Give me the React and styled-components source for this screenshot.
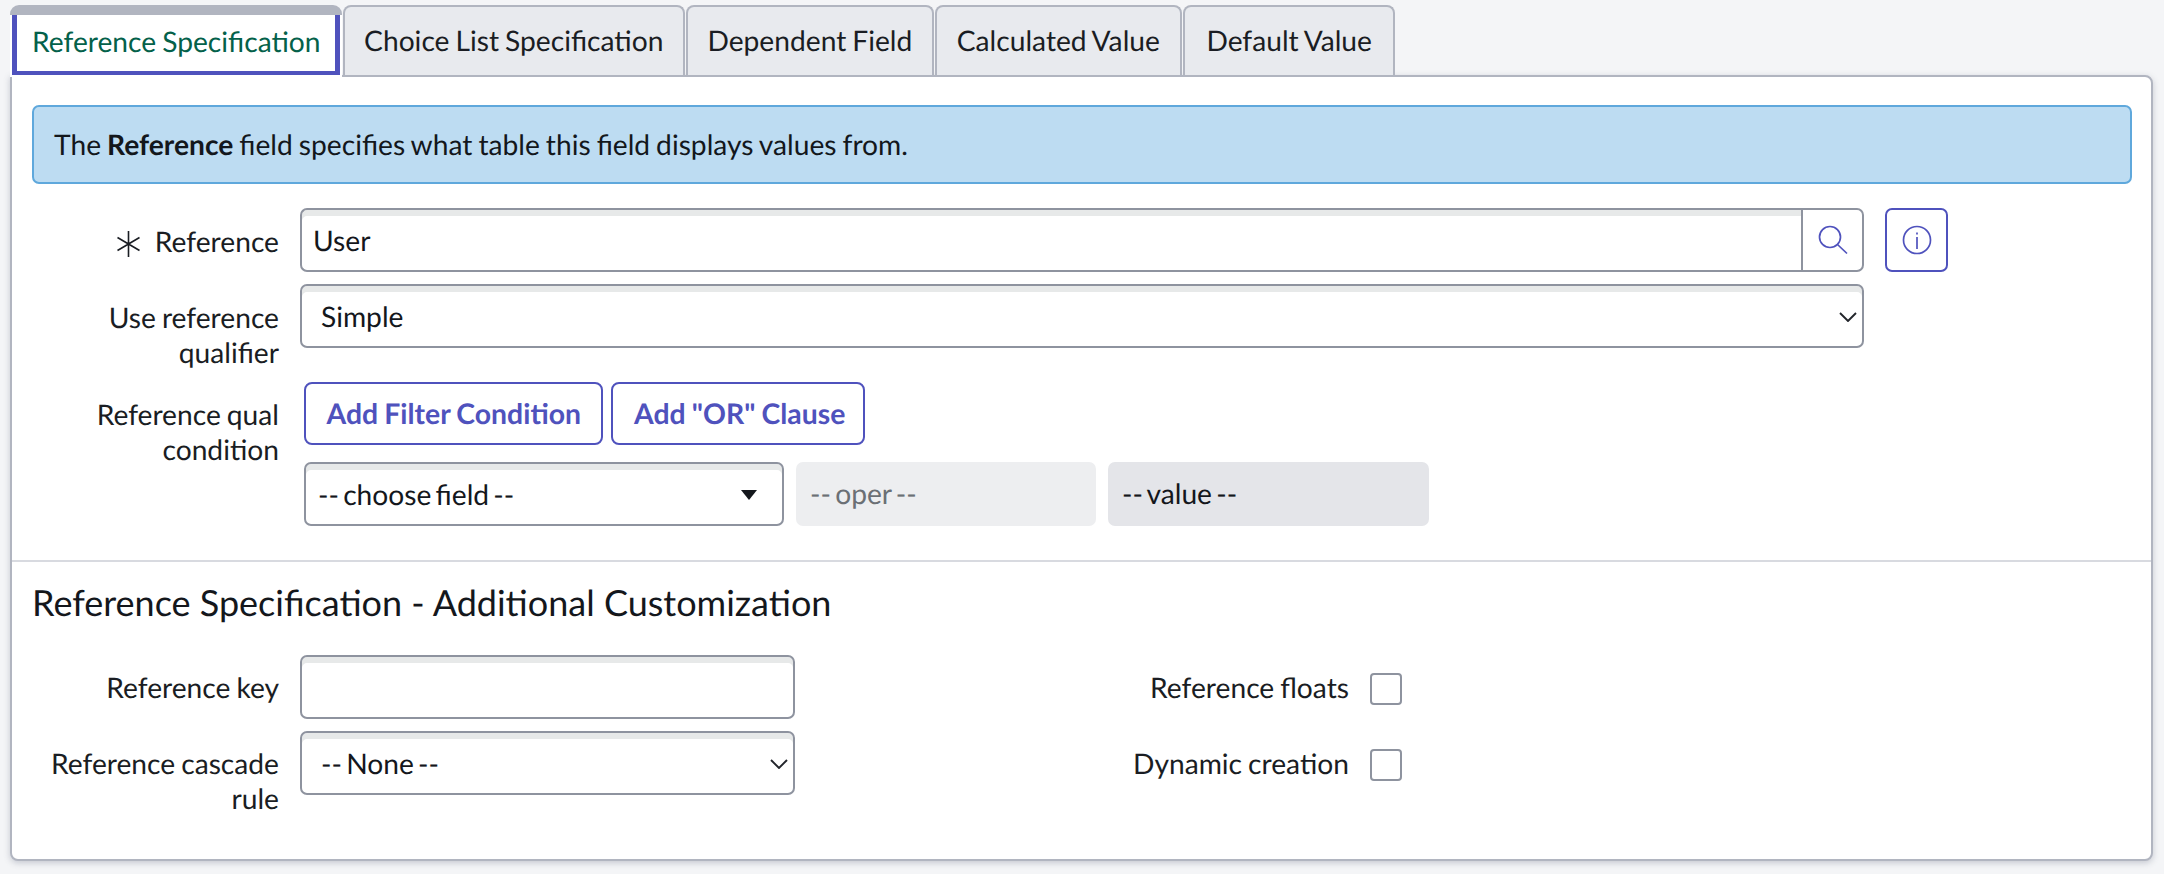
import React from "react";
import styled, { createGlobalStyle } from "styled-components";

const Global = createGlobalStyle`
  html, body { margin: 0; background: #f4f5f7; }
  body {
    font-family: Lato, "Noto Sans", sans-serif;
    font-size: 28.2px;
    word-spacing: -1.2px;
    color: #1a1d23;
    text-rendering: geometricPrecision;
  }
  input, button { text-rendering: geometricPrecision; }
  * { box-sizing: border-box; }
`;

const Page = styled.div`
  padding: 5px 11px 13px 10px;
`;
const TabBar = styled.div`
  display: flex;
  align-items: flex-start;
  gap: 1px;
`;
const Tab = styled.div`
  height: 70px;
  padding: 0 ${(p) => p.$pad ?? 19.5}px;
  display: flex;
  align-items: center;
  background: #e8eaee;
  border: 2px solid #b1b5c0;
  border-bottom: none;
  border-radius: 8px 8px 0 0;
  line-height: 60px;
  white-space: nowrap;
`;
const ActiveTab = styled.div`
  position: relative;
  z-index: 1;
  height: 72px;
  margin-bottom: -2px;
  border-top: 10px solid #b1b5c0;
  border-radius: 9px 9px 0 0;
  background: #fff;
  white-space: nowrap;
`;
const ActiveLabel = styled.div`
  height: 60px;
  margin: 0 2px;
  padding: 0 14px 3px 15px;
  display: flex;
  align-items: center;
  color: #04614a;
  border: solid #4f52bd;
  border-width: 0 5px 4px 5px;
`;
const Panel = styled.div`
  background: #fff;
  border: 2px solid #b1b5c0;
  border-radius: 0 8px 8px 8px;
  box-shadow: 0 2px 6px rgba(90, 96, 120, 0.3);
`;
const Section = styled.div`
  padding: 28px 19.5px 34px 20px;
  display: flex;
  flex-direction: column;
`;
const Notice = styled.div`
  height: 79px;
  margin-bottom: 24px;
  padding-left: 20px;
  display: flex;
  align-items: center;
  background: #bddcf2;
  border: 2px solid #5fa8dc;
  border-radius: 7px;
  color: #13171c;
  b { font-weight: 700; white-space: pre; }
  span { white-space: pre; }
`;
const Row = styled.div`
  display: flex;
  align-items: flex-start;
  gap: 21px;
  margin-bottom: ${(p) => p.$mb ?? 12}px;
`;
const Label = styled.div`
  width: 247px;
  flex: none;
  padding-top: 16.5px;
  text-align: right;
  line-height: 35px;
`;
const Star = styled.svg`
  width: 25px;
  height: 26px;
  margin-right: 14px;
  vertical-align: -5px;
`;
const fieldBox = `
  height: 64px;
  background: #fff;
  border: 2px solid #8e939f;
  box-shadow: inset 0 6px 0 #e7e9e9;
  color: #14171c;
  font-family: inherit;
  font-size: 28.2px;
`;
const RefGroup = styled.div`
  width: 1564px;
  display: flex;
`;
const TextInput = styled.input`
  ${fieldBox}
  flex: 1;
  min-width: 0;
  padding: 2px 11px 0;
  border-radius: 7px 0 0 7px;
  border-right: none;
  outline: none;
`;
const SearchButton = styled.button`
  width: 63px;
  height: 64px;
  padding: 0;
  display: flex;
  align-items: center;
  justify-content: center;
  background: #fff;
  border: 2px solid #8e939f;
  border-radius: 0 7px 7px 0;
`;
const InfoButton = styled.button`
  width: 63px;
  height: 64px;
  padding: 0;
  flex: none;
  display: flex;
  align-items: center;
  justify-content: center;
  background: #fff;
  border: 2px solid #4f52bd;
  border-radius: 7px;
`;
const Select = styled.div`
  ${fieldBox}
  width: ${(p) => p.$w}px;
  flex: none;
  padding: 2px ${(p) => p.$pr ?? 5}px 0 ${(p) => p.$pl ?? 19}px;
  display: flex;
  align-items: center;
  justify-content: space-between;
  border-radius: 7px;
  white-space: nowrap;
  word-spacing: -3px;
`;
const Plain = styled.input`
  ${fieldBox}
  width: 495px;
  flex: none;
  padding: 2px 11px 0;
  border-radius: 7px;
  outline: none;
`;
const Stack = styled.div`
  padding-left: 4px;
  display: flex;
  flex-direction: column;
  gap: 17px;
`;
const Buttons = styled.div`
  display: flex;
  gap: 8px;
`;
const ActionButton = styled.button`
  height: 63px;
  padding: 2px ${(p) => p.$pr ?? 20.5}px 0 20.5px;
  background: #fff;
  border: 2px solid #4f52bd;
  border-radius: 8px;
  color: #4f52bd;
  font-family: inherit;
  font-size: 28.4px;
  font-weight: 700;
  word-spacing: -0.8px;
`;
const Filters = styled.div`
  display: flex;
  gap: 12px;
`;
const Muted = styled.div`
  width: ${(p) => p.$w}px;
  height: 64px;
  padding: 0 14px;
  display: flex;
  align-items: center;
  background: ${(p) => p.$bg};
  border-radius: 7px;
  color: ${(p) => p.$fg};
  white-space: nowrap;
  word-spacing: -3px;
`;
const Divider = styled.div`
  height: 2px;
  background: #d8dae0;
`;
const Lower = styled.div`
  padding: 20px 19px 42px 20px;
`;
const Heading = styled.h2`
  margin: 0 0 33px;
  font-size: 36px;
  font-weight: 400;
  line-height: 40px;
  word-spacing: 0;
  color: #14171c;
`;
const Columns = styled.div`
  display: flex;
`;
const LeftColumn = styled.div`
  flex: none;
`;
const RightColumn = styled.div`
  flex: none;
  width: 607px;
`;
const CheckRow = styled.div`
  display: flex;
  align-items: flex-start;
  gap: 21px;
  height: 64px;
  margin-bottom: 12px;
`;
const CheckLabel = styled.div`
  flex: 1;
  padding-top: 16.5px;
  text-align: right;
  line-height: 35px;
`;
const Check = styled.input`
  appearance: none;
  flex: none;
  width: 32px;
  height: 32px;
  margin: 18px 0 0;
  background: #fff;
  border: 2px solid #8e939f;
  border-radius: 4px;
`;

const Chevron = () => (
  <svg width="18" height="10" viewBox="0 0 18 10" fill="none">
    <path d="M1 1l8 8 8-8" stroke="#22252b" strokeWidth="1.9" />
  </svg>
);
const Triangle = () => (
  <svg width="16" height="10" viewBox="0 0 16 10">
    <path d="M0 0h16l-8 10z" fill="#14171c" />
  </svg>
);

export default function App() {
  return (
    <Page>
      <Global />
      <TabBar>
        <ActiveTab>
          <ActiveLabel>Reference Specification</ActiveLabel>
        </ActiveTab>
        <Tab>Choice List Specification</Tab>
        <Tab>Dependent Field</Tab>
        <Tab $pad={20}>Calculated Value</Tab>
        <Tab $pad={21.5}>Default Value</Tab>
      </TabBar>
      <Panel>
        <Section>
          <Notice>
            <span>The </span>
            <b>Reference</b>
            <span> field specifies what table this field displays values from.</span>
          </Notice>
          <Row>
            <Label>
              <Star viewBox="0 0 25 26" fill="none" stroke="#1a1d23" strokeWidth="1.6">
                <path d="M12.5 0v26M1.5 6.5l22 13M23.5 6.5l-22 13" />
              </Star>
              Reference
            </Label>
            <RefGroup>
              <TextInput defaultValue="User" readOnly />
              <SearchButton aria-label="Search">
                <svg width="32" height="32" viewBox="0 0 32 32" fill="none" stroke="#4f52bd" strokeWidth="1.7">
                  <circle cx="13" cy="13" r="10.5" />
                  <path d="M20.5 20.5L30 29.5" />
                </svg>
              </SearchButton>
            </RefGroup>
            <InfoButton aria-label="Info">
              <svg width="30" height="30" viewBox="0 0 30 30" fill="none" stroke="#4f52bd" strokeWidth="1.7">
                <circle cx="15" cy="15" r="13.5" />
                <path d="M15 12v12M15 7.5v2" />
              </svg>
            </InfoButton>
          </Row>
          <Row $mb={11}>
            <Label>Use reference qualifier</Label>
            <Select $w={1564}>
              Simple
              <Chevron />
            </Select>
          </Row>
          <Row $mb={0}>
            <Label>Reference qual condition</Label>
            <Stack>
              <Buttons>
                <ActionButton>Add Filter Condition</ActionButton>
                <ActionButton $pr={18}>Add "OR" Clause</ActionButton>
              </Buttons>
              <Filters>
                <Select $w={480} $pl={12} $pr={25}>
                  -- choose field --
                  <Triangle />
                </Select>
                <Muted $w={300} $bg="#edeef0" $fg="#6b7075">-- oper --</Muted>
                <Muted $w={321} $bg="#e4e5e9" $fg="#14171c">-- value --</Muted>
              </Filters>
            </Stack>
          </Row>
        </Section>
        <Divider />
        <Lower>
          <Heading>Reference Specification - Additional Customization</Heading>
          <Columns>
            <LeftColumn>
              <Row>
                <Label>Reference key</Label>
                <Plain readOnly />
              </Row>
              <Row $mb={0}>
                <Label>Reference cascade rule</Label>
                <Select $w={495}>
                  -- None --
                  <Chevron />
                </Select>
              </Row>
            </LeftColumn>
            <RightColumn>
              <CheckRow>
                <CheckLabel>Reference floats</CheckLabel>
                <Check type="checkbox" />
              </CheckRow>
              <CheckRow>
                <CheckLabel>Dynamic creation</CheckLabel>
                <Check type="checkbox" />
              </CheckRow>
            </RightColumn>
          </Columns>
        </Lower>
      </Panel>
    </Page>
  );
}
